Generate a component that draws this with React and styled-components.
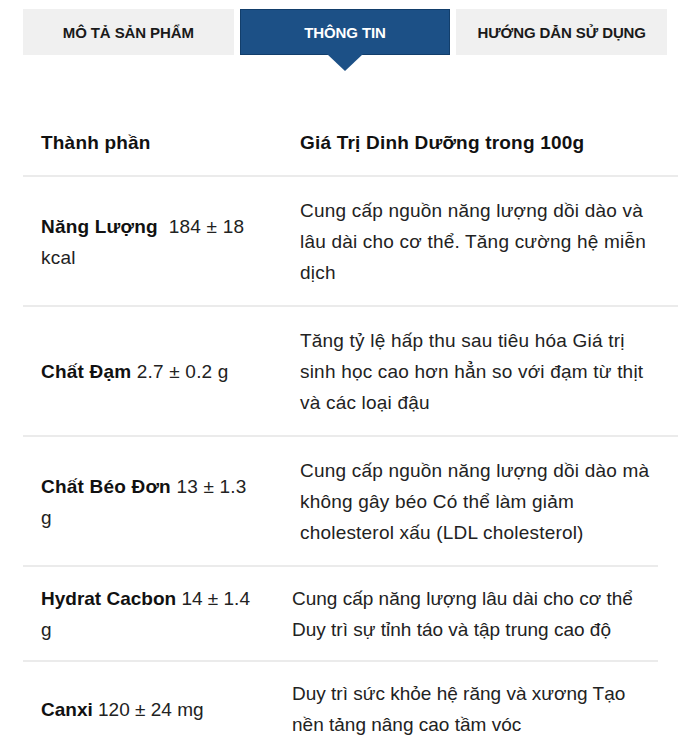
import React from "react";
import styled, { createGlobalStyle } from "styled-components";

const GlobalStyle = createGlobalStyle`
  body {
    margin: 0;
    background: #fff;
    font-family: "Liberation Sans", Arial, sans-serif;
    color: #222;
  }
`;

const tabs = ["MÔ TẢ SẢN PHẨM", "THÔNG TIN", "HƯỚNG DẪN SỬ DỤNG"];

const rows = [
  {
    name: "Năng Lượng",
    value: "\u00a0 184 ± 18 kcal",
    text: "Cung cấp nguồn năng lượng dồi dào và lâu dài cho cơ thể. Tăng cường hệ miễn dịch",
  },
  {
    name: "Chất Đạm",
    value: " 2.7 ± 0.2 g",
    text: "Tăng tỷ lệ hấp thu sau tiêu hóa Giá trị sinh học cao hơn hẳn so với đạm từ thịt và các loại đậu",
  },
  {
    name: "Chất Béo Đơn",
    value: " 13 ± 1.3 g",
    text: "Cung cấp nguồn năng lượng dồi dào mà không gây béo Có thể làm giảm cholesterol xấu (LDL cholesterol)",
  },
  {
    name: "Hydrat Cacbon",
    value: " 14 ± 1.4 g",
    text: "Cung cấp năng lượng lâu dài cho cơ thể Duy trì sự tỉnh táo và tập trung cao độ",
    narrow: true,
  },
  {
    name: "Canxi",
    value: " 120 ± 24 mg",
    text: "Duy trì sức khỏe hệ răng và xương Tạo nền tảng nâng cao tầm vóc",
    narrow: true,
  },
];

const Page = styled.div`
  padding: 9px 0 0 23px;
`;

const TabBar = styled.div`
  display: flex;
  gap: 6px;
  width: 644px;
`;

const Tab = styled.div`
  position: relative;
  flex: 1;
  height: 46px;
  box-sizing: border-box;
  display: flex;
  align-items: center;
  justify-content: center;
  font-size: 15px;
  font-weight: bold;
  letter-spacing: -0.1px;
  background: ${(p) => (p.active ? "#1c5086" : "#f0f0f0")};
  color: ${(p) => (p.active ? "#fff" : "#1a1a1a")};
  border: 1px solid ${(p) => (p.active ? "#123e6b" : "#f0f0f0")};

  &::after {
    content: "";
    display: ${(p) => (p.active ? "block" : "none")};
    position: absolute;
    left: 50%;
    top: 100%;
    margin-left: -18px;
    border-left: 18px solid transparent;
    border-right: 18px solid transparent;
    border-top: 17px solid #1c5086;
  }
`;

const Table = styled.div`
  margin-top: 54px;
`;

const Row = styled.div`
  display: grid;
  grid-template-columns: ${(p) => (p.narrow ? "269px 366px" : "277px 378px")};
  align-items: center;
  width: ${(p) => (p.narrow ? "635px" : "655px")};
  border-top: ${(p) => (p.head ? "none" : "2px solid #ebebeb")};
  padding: ${(p) => (p.narrow ? "16px 0 15px" : "18px 0 17px")};
  font-size: 19px;
  line-height: 31px;
  letter-spacing: ${(p) => (p.narrow ? "0" : "0.2px")};
`;

const NameCell = styled.div`
  padding: 0 ${(p) => (p.narrow ? "39px" : "47px")} 0 18px;

  b {
    font-weight: bold;
    color: #111;
  }
`;

const TextCell = styled.div`
  padding-right: ${(p) => (p.narrow ? "18px" : "23px")};
  font-weight: ${(p) => (p.head ? "bold" : "normal")};
  color: ${(p) => (p.head ? "#111" : "#222")};
`;

export default function App() {
  return (
    <>
      <GlobalStyle />
      <Page>
        <TabBar>
          {tabs.map((t, i) => (
            <Tab key={t} active={i === 1}>
              {t}
            </Tab>
          ))}
        </TabBar>
        <Table>
          <Row head>
            <NameCell>
              <b>Thành phần</b>
            </NameCell>
            <TextCell head>Giá Trị Dinh Dưỡng trong 100g</TextCell>
          </Row>
          {rows.map((r) => (
            <Row key={r.name} narrow={r.narrow}>
              <NameCell narrow={r.narrow}>
                <b>{r.name}</b>
                {r.value}
              </NameCell>
              <TextCell narrow={r.narrow}>{r.text}</TextCell>
            </Row>
          ))}
        </Table>
      </Page>
    </>
  );
}
